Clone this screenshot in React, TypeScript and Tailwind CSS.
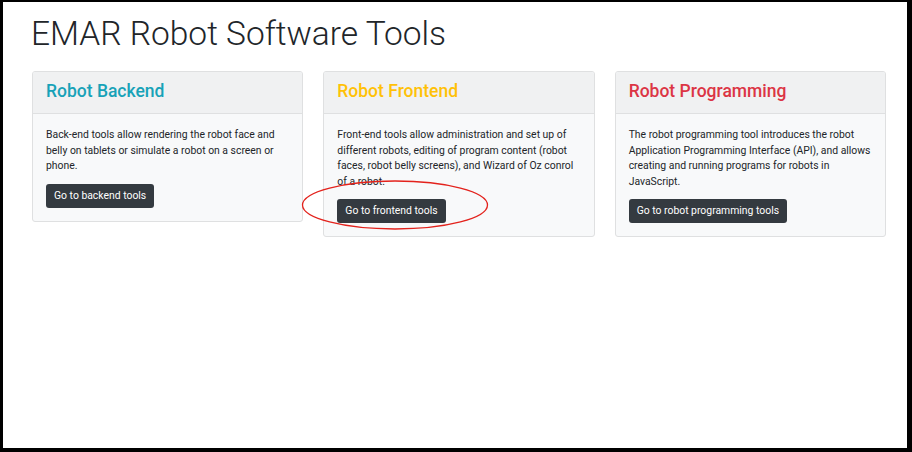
const cards = [
  {
    title: 'Robot Backend',
    color: 'text-[#17a2b8]',
    text: 'Back-end tools allow rendering the robot face and belly on tablets or simulate a robot on a screen or phone.',
    button: 'Go to backend tools',
  },
  {
    title: 'Robot Frontend',
    color: 'text-[#ffc107]',
    text: 'Front-end tools allow administration and set up of different robots, editing of program content (robot faces, robot belly screens), and Wizard of Oz conrol of a robot.',
    button: 'Go to frontend tools',
  },
  {
    title: 'Robot Programming',
    color: 'text-[#dc3545]',
    text: 'The robot programming tool introduces the robot Application Programming Interface (API), and allows creating and running programs for robots in JavaScript.',
    button: 'Go to robot programming tools',
  },
]

export default function App() {
  return (
    <div className="relative w-[912px] h-[452px] overflow-hidden bg-white border-black border-l-[3px] border-t-[2px] border-r-[5px] border-b-[4px] font-['Roboto',sans-serif] text-[#212529]">
      <div className="pl-[29px] pr-[21px] pt-[12px]">
        <h1 className="text-[33.5px] leading-[40px] font-light mb-[17px] -ml-px">EMAR Robot Software Tools</h1>

        {/* Tool cards */}
        <div className="grid grid-cols-3 gap-5 items-start">
          {cards.map((card) => (
            <div key={card.title} className="border border-[#dfe0e1] rounded-[3px] overflow-hidden bg-[#f8f9fa]">
              <div className="bg-[#f0f1f2] border-b border-[#dfe0e1] px-[13px] pt-[8px] pb-[11px]">
                <h3 className={`text-[17.5px] leading-[22px] font-medium ${card.color}`}>{card.title}</h3>
              </div>
              <div className="p-[13px]">
                <p className="text-[10.4px] leading-[15.5px] mb-[10px]">{card.text}</p>
                <button className="block bg-[#343a40] text-white text-[10.4px] leading-[16px] px-[8px] py-[4px] rounded-[3px]">
                  {card.button}
                </button>
              </div>
            </div>
          ))}
        </div>
      </div>

      {/* annotation */}
      <svg className="absolute left-0 top-0 pointer-events-none" width="904" height="446">
        <ellipse cx="392" cy="203" rx="92.5" ry="24" fill="none" stroke="#e3221c" strokeWidth="1.3" />
      </svg>
    </div>
  )
}
